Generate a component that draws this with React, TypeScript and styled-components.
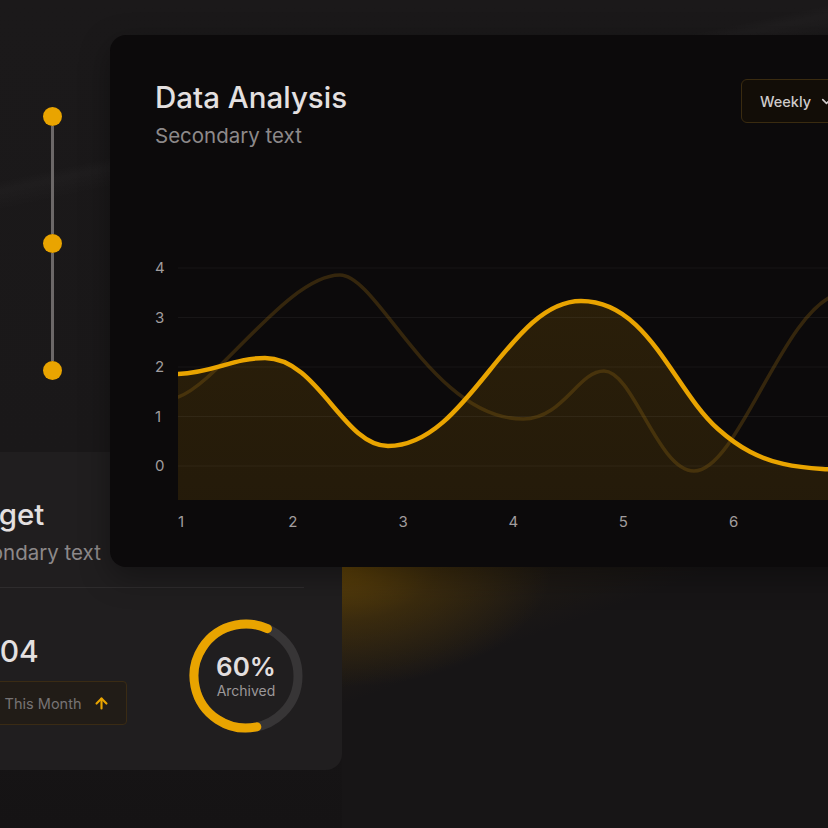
import React from "react";
import styled, { createGlobalStyle } from "styled-components";
import { ChevronDown, ArrowUp } from "lucide-react";

const GlobalStyle = createGlobalStyle`
  html, body { margin: 0; padding: 0; background: #161415; }
  body {
    font-family: Inter, "Noto Sans", "Liberation Sans", sans-serif;
    -webkit-font-smoothing: antialiased;
  }
  * { box-sizing: border-box; }
`;

const ACCENT = "#e9a400";

const Stage = styled.div`
  width: 828px;
  height: 828px;
  overflow: hidden;
  display: grid;
  grid-template-columns: 110px 232px 1fr;
  grid-template-rows: 35px 417px 115px 203px 1fr;
  background:
    linear-gradient(168deg, transparent 0 18%, rgba(255,255,255,0.018) 19%, transparent 21%),
    linear-gradient(172deg, transparent 0 72%, rgba(255,255,255,0.015) 73%, transparent 75%),
    linear-gradient(180deg, #1b191a 0%, #1a1819 55%, #151314 100%);
`;

/* ---------- timeline ---------- */
const Timeline = styled.div`
  grid-column: 1;
  grid-row: 2;
  display: flex;
  flex-direction: column;
  align-items: center;
  width: 19px;
  margin-left: 43px;
  padding-top: 72px;
`;

const Dot = styled.span`
  width: 19px;
  height: 19px;
  border-radius: 50%;
  background: ${ACCENT};
  flex: none;
`;

const Rail = styled.span`
  width: 3px;
  height: 108px;
  background: #6c6868;
  flex: none;
`;

/* ---------- cards ---------- */
const ChartCard = styled.section`
  grid-column: 2 / 4;
  grid-row: 2 / 4;
  width: 788px;
  z-index: 2;
  background: #0c0a0b;
  border-radius: 16px;
  padding: 45px;
  display: flex;
  flex-direction: column;
  box-shadow: 0 10px 30px rgba(0, 0, 0, 0.35);
`;

const BudgetCard = styled.section`
  grid-column: 1 / 3;
  grid-row: 3 / 5;
  margin-left: -91px;
  z-index: 1;
  background: #201e1f;
  border-radius: 16px;
  padding: 45px 38px 0 45px;
  display: flex;
  flex-direction: column;
`;

const GlowCard = styled.div`
  grid-column: 3;
  grid-row: 4 / 6;
  background:
    radial-gradient(ellipse 210px 120px at 0% 0%, rgba(140, 95, 0, 0.55) 0%, rgba(115, 78, 0, 0.3) 45%, rgba(0, 0, 0, 0) 100%),
    linear-gradient(160deg, rgba(120, 80, 0, 0.18) 0%, rgba(0, 0, 0, 0) 30%),
    #171516;
`;

const HeaderRow = styled.div`
  display: flex;
  justify-content: space-between;
  align-items: flex-start;
`;

const TitleBlock = styled.div`
  display: flex;
  flex-direction: column;
  gap: 10px;
`;

const Title = styled.h2`
  margin: 0;
  font-size: 29.5px;
  line-height: 34px;
  font-weight: 500;
  color: #e4e0e0;
  white-space: nowrap;
`;

const Subtitle = styled.p`
  margin: 0;
  font-size: 20.5px;
  line-height: 24px;
  color: #8d898a;
  white-space: nowrap;
`;

const Divider = styled.hr<{ $gap: number; $color: string }>`
  margin: ${(p) => p.$gap}px 0 0;
  border: 0;
  height: 1px;
  background: ${(p) => p.$color};
`;

const SelectButton = styled.button`
  margin-top: -1px;
  height: 44px;
  display: flex;
  align-items: center;
  gap: 8px;
  padding: 0 18px;
  background: #120d07;
  border: 1px solid #3a2b10;
  border-radius: 6px;
  color: #cfcbcb;
  font-family: inherit;
  font-size: 14.5px;
  font-weight: 500;
`;

/* ---------- chart ---------- */
const ChartArea = styled.div`
  margin-top: 73px;
  display: grid;
  grid-template-columns: 23px 1fr;
  grid-template-rows: 251px auto;
  row-gap: 12px;
`;

const YAxis = styled.div`
  grid-column: 1;
  grid-row: 1;
  display: flex;
  flex-direction: column;
  gap: 29.5px;
  padding-top: 9px;
`;

const AxisLabel = styled.span`
  font-size: 15px;
  line-height: 20px;
  color: #a19d9e;
`;

const Plot = styled.svg`
  grid-column: 2;
  grid-row: 1;
  display: block;
`;

const XAxis = styled.div`
  grid-column: 2;
  grid-row: 2;
  display: grid;
  grid-template-columns: repeat(7, 110.2px);
`;

/* ---------- budget content ---------- */
const StatsRow = styled.div`
  margin-top: 30px;
  display: flex;
  justify-content: space-between;
  align-items: flex-start;
`;

const StatColumn = styled.div`
  padding-top: 15px;
  display: flex;
  flex-direction: column;
  align-items: flex-start;
  gap: 12px;
`;

const BigValue = styled.div`
  font-size: 30px;
  line-height: 36px;
  font-weight: 500;
  color: #e4e0e0;
`;

const TrendPill = styled.div`
  height: 44px;
  display: flex;
  align-items: center;
  gap: 12px;
  padding: 0 16px 0 8px;
  background: #211c17;
  border: 1px solid #3a2b14;
  border-radius: 4px;
  font-size: 14.5px;
  color: #777374;
`;

const TrendValue = styled.span`
  color: ${ACCENT};
  font-weight: 600;
  margin-right: -4px;
`;

const Donut = styled.div`
  display: grid;
  width: 116px;
  height: 116px;
  place-items: center;
  & > * { grid-area: 1 / 1; }
`;

const DonutLabel = styled.div`
  display: flex;
  flex-direction: column;
  align-items: center;
`;

const DonutValue = styled.span`
  font-size: 26px;
  line-height: 30px;
  font-weight: 600;
  color: #e2dede;
`;

const DonutCaption = styled.span`
  font-size: 14px;
  line-height: 18px;
  color: #9c9899;
`;

const mainPath =
  "M0,125 C35,124 55,109 87,109 C140,109 165,197 210,197 C290,197 330,52 403,52 C470,52 495,140 540,180 C585,220 620,220 700,222";
const secondPath =
  "M0,148 C40,135 110,26 162,26 C200,26 255,170 345,170 C385,170 400,122 426,122 C455,122 480,222 516,222 C560,222 605,60 660,45 C680,41 700,40 720,40";

const gridYs = [19, 68.5, 118, 167.5, 217];

export default function App() {
  const circ = 2 * Math.PI * 52;
  return (
    <>
      <GlobalStyle />
      <Stage>
        <Timeline>
          <Dot />
          <Rail />
          <Dot />
          <Rail />
          <Dot />
        </Timeline>

        <ChartCard>
          <HeaderRow>
            <TitleBlock>
              <Title>Data Analysis</Title>
              <Subtitle>Secondary text</Subtitle>
            </TitleBlock>
            <SelectButton>
              Weekly
              <ChevronDown size={15} strokeWidth={2.5} />
            </SelectButton>
          </HeaderRow>
          <Divider $gap={28} $color="#2b2216" />
          <ChartArea>
            <YAxis>
              {["4", "3", "2", "1", "0"].map((l) => (
                <AxisLabel key={l}>{l}</AxisLabel>
              ))}
            </YAxis>
            <Plot width="675" height="251" viewBox="0 0 675 251">
              <defs>
                <linearGradient id="fillGrad" x1="0" y1="0" x2="0" y2="1">
                  <stop offset="0" stopColor="#c88a00" stopOpacity="0.16" />
                  <stop offset="1" stopColor="#c88a00" stopOpacity="0.13" />
                </linearGradient>
              </defs>
              <path d={`${mainPath} L700,251 L0,251 Z`} fill="url(#fillGrad)" />
              {gridYs.map((y) => (
                <line key={y} x1="0" x2="675" y1={y} y2={y} stroke="rgba(255,255,255,0.05)" strokeWidth="1" />
              ))}
              <path d={secondPath} fill="none" stroke="rgba(140,100,20,0.32)" strokeWidth="3.5" strokeLinecap="round" />
              <path d={mainPath} fill="none" stroke={ACCENT} strokeWidth="4.5" strokeLinecap="round" />
            </Plot>
            <XAxis>
              {["1", "2", "3", "4", "5", "6", "7"].map((l) => (
                <AxisLabel key={l}>{l}</AxisLabel>
              ))}
            </XAxis>
          </ChartArea>
        </ChartCard>

        <BudgetCard>
          <TitleBlock>
            <Title>Target</Title>
            <Subtitle>Secondary text</Subtitle>
          </TitleBlock>
          <Divider $gap={22} $color="#2e2c2d" />
          <StatsRow>
            <StatColumn>
              <BigValue>2,304</BigValue>
              <TrendPill>
                <TrendValue>+8%</TrendValue>
                <span>This Month</span>
                <ArrowUp size={17} strokeWidth={3} color={ACCENT} />
              </TrendPill>
            </StatColumn>
            <Donut>
              <svg width="116" height="116" viewBox="0 0 116 116">
                <circle cx="58" cy="58" r="52" fill="none" stroke="#373536" strokeWidth="9" />
                <circle
                  cx="58"
                  cy="58"
                  r="52"
                  fill="none"
                  stroke={ACCENT}
                  strokeWidth="9"
                  strokeLinecap="round"
                  strokeDasharray={`${circ * 0.6} ${circ}`}
                  transform="rotate(78 58 58)"
                />
              </svg>
              <DonutLabel>
                <DonutValue>60%</DonutValue>
                <DonutCaption>Archived</DonutCaption>
              </DonutLabel>
            </Donut>
          </StatsRow>
        </BudgetCard>

        <GlowCard />
      </Stage>
    </>
  );
}
